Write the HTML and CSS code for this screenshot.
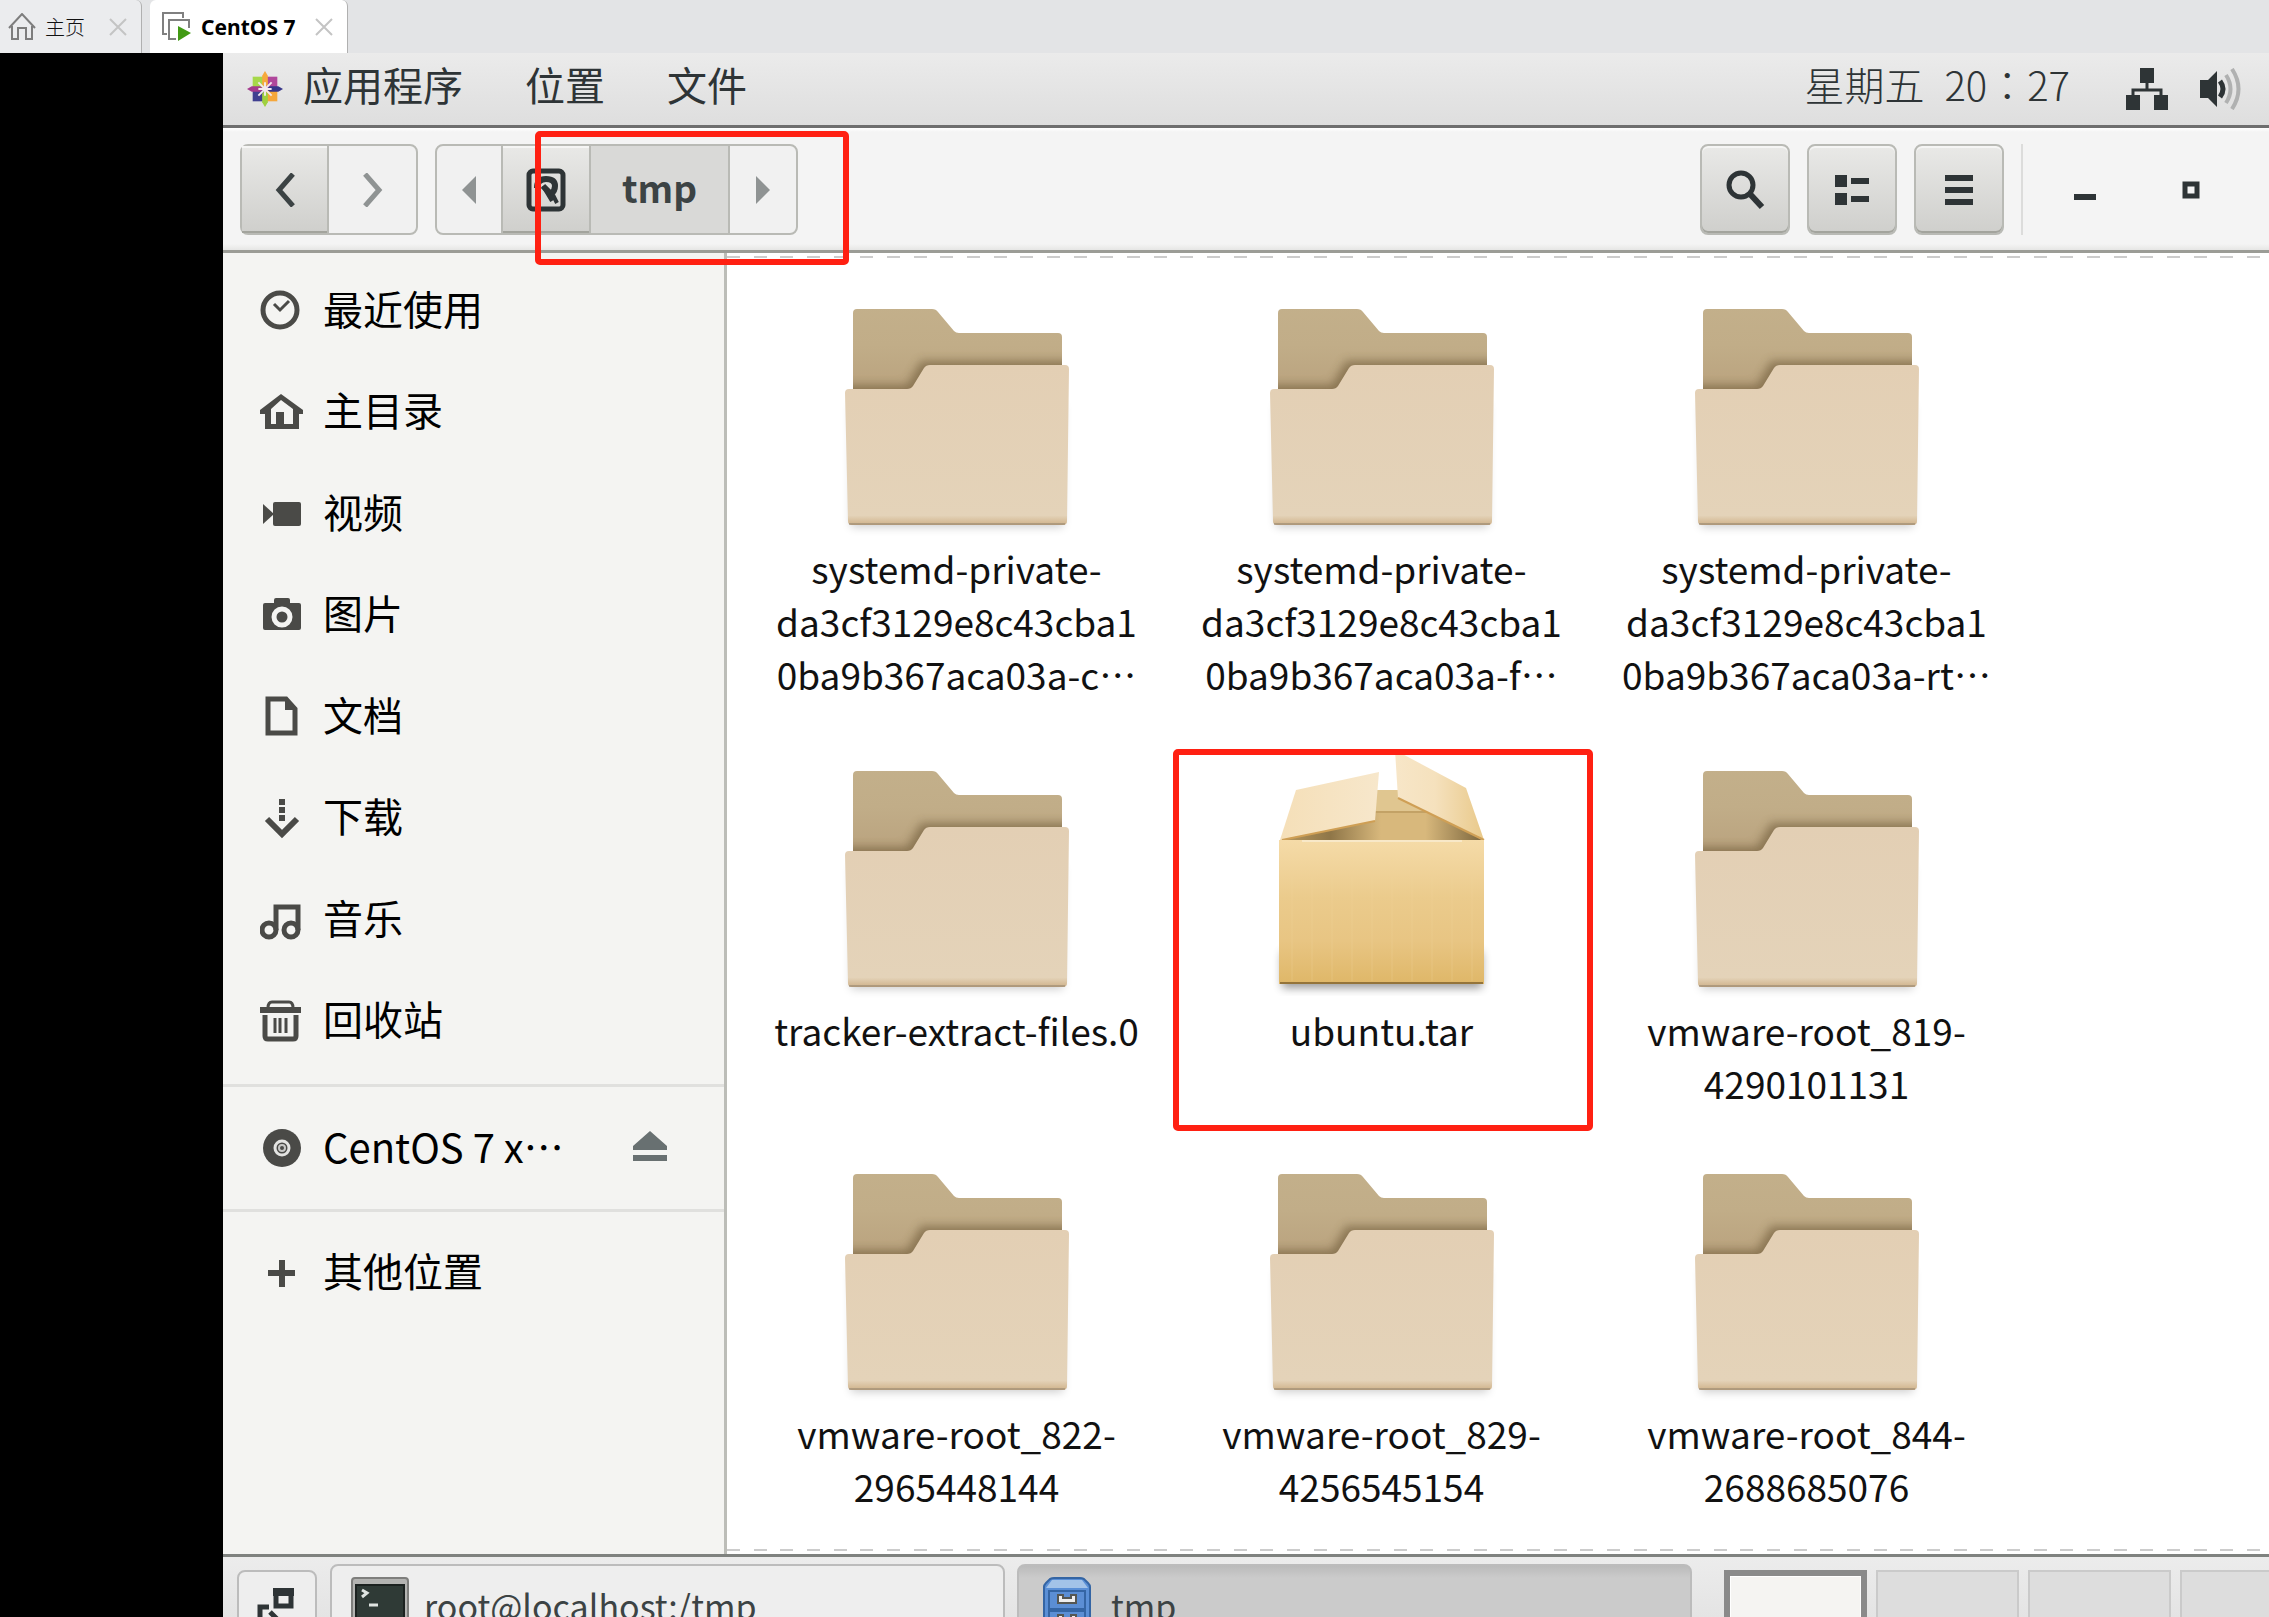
FILE: index.html
```
<!DOCTYPE html>
<html lang="zh-CN">
<head>
  <meta charset="utf-8">
  <title>CentOS 7</title>
  <link rel="stylesheet" href="styles.css">
</head>
<body>
  <!-- shared icons -->
  <svg class="defs" width="0" height="0">
    <defs>
      <linearGradient id="folder-back" x1="0" y1="0" x2="0" y2="1">
        <stop offset="0" stop-color="#c4b18c"/>
        <stop offset="0.5" stop-color="#c1ad88"/>
        <stop offset="1" stop-color="#b79f7b"/>
      </linearGradient>
      <linearGradient id="folder-front" x1="0" y1="0" x2="0" y2="1">
        <stop offset="0" stop-color="#e3cfb4"/>
        <stop offset="0.94" stop-color="#e4d3b9"/>
        <stop offset="1" stop-color="#cfb28a"/>
      </linearGradient>
      <linearGradient id="box-front" x1="0" y1="0" x2="0" y2="1">
        <stop offset="0" stop-color="#f5dba8"/>
        <stop offset="0.4" stop-color="#ebcb8c"/>
        <stop offset="0.7" stop-color="#e8c583"/>
        <stop offset="1" stop-color="#dfb768"/>
      </linearGradient>
      <linearGradient id="box-flap" x1="0" y1="0" x2="1" y2="0">
        <stop offset="0" stop-color="#f7e6c8"/>
        <stop offset="0.45" stop-color="#f5e1bd"/>
        <stop offset="1" stop-color="#e9c98a"/>
      </linearGradient>
      <linearGradient id="box-flap-left" x1="0" y1="0" x2="1" y2="0">
        <stop offset="0" stop-color="#f5dfb8"/>
        <stop offset="1" stop-color="#f7e7cb"/>
      </linearGradient>
      <linearGradient id="box-inside" x1="0" y1="0" x2="1" y2="0">
        <stop offset="0" stop-color="#b9995e"/>
        <stop offset="0.25" stop-color="#8f7648"/>
        <stop offset="0.5" stop-color="#d8b87c"/>
        <stop offset="0.72" stop-color="#d8b87c"/>
        <stop offset="1" stop-color="#7d673e"/>
      </linearGradient>
      <filter id="soft" x="-20%" y="-20%" width="140%" height="140%">
        <feGaussianBlur stdDeviation="5"/>
      </filter>
      <clipPath id="back-shape">
        <path d="M16 110V28q0-4 4-4h75q4 0 6 3l16 19q2 2 5 2h99q4 0 4 4v58z"/>
      </clipPath>
      <symbol id="folder" viewBox="0 0 240 256">
        <path d="M14 120h212v122H14z" fill="#000" opacity="0.2" filter="url(#soft)"/>
        <g clip-path="url(#back-shape)">
          <path d="M0 0h240v120H0z" fill="url(#folder-back)"/>
          <path d="M-10 100h80l14-24h170v60H-10z" fill="#6b5636" opacity="0.6" filter="url(#soft)"/>
        </g>
        <path d="M8 108q0-4 4-4h58q4 0 6-3l11-18q2-3 6-3h135q4 0 4 4l-2 152q0 4-4 4H15q-4 0-4-4z" fill="url(#folder-front)"/>
        <path d="M12 239h216" stroke="#8d7f6b" stroke-width="1"/>
      </symbol>
    </defs>
  </svg>

  <header class="tabs">
    <div class="tab">
      <svg width="28" height="28" viewBox="0 0 28 28" fill="none" stroke="#7d7d7d" stroke-width="2"><path d="M1 15 14 1l13 14M4 13v13h6V15h8v11h6V13"/></svg>
      <button class="tab-name">主页</button>
      <button class="tab-close" aria-label="关闭"><svg width="18" height="18" viewBox="0 0 18 18" stroke="#c4c4c4" stroke-width="2"><path d="M1 1l16 16M17 1 1 17"/></svg></button>
    </div>
    <div class="tab tab-active">
      <svg width="30" height="30" viewBox="0 0 30 30"><path d="M5 22H1V1h20v5M14 27H7V8h20v8" fill="none" stroke="#808080" stroke-width="2"/><path d="M16 14v15l13-8z" fill="#429a14"/></svg>
      <button class="tab-name">CentOS 7</button>
      <button class="tab-close" aria-label="关闭"><svg width="18" height="18" viewBox="0 0 18 18" stroke="#c4c4c4" stroke-width="2"><path d="M1 1l16 16M17 1 1 17"/></svg></button>
    </div>
  </header>

  <div class="desktop">
    <nav class="panel">
      <svg class="logo" width="36" height="38" viewBox="0 0 38 38">
        <path d="M6 6h12v12H6z" fill="#a6d84a"/><path d="M20 6h12v12H20z" fill="#b0479b"/>
        <path d="M6 20h12v12H6z" fill="#403f90"/><path d="M20 20h12v12H20z" fill="#f5a73b"/>
        <path d="M19 0l3 5v9l-3 4-3-4V5z" fill="#f6a93c"/><path d="M38 19l-5 3h-9l-4-3 4-3h9z" fill="#37368a"/>
        <path d="M19 38l-3-5v-9l3-4 3 4v9z" fill="#9fd03f"/><path d="M0 19l5-3h9l4 3-4 3H5z" fill="#a53a8e"/>
        <path d="M12 12l14 14M26 12 12 26M19 12v14M12 19h14" stroke="#f3e9ee" stroke-width="2"/>
      </svg>
      <button>应用程序</button>
      <button>位置</button>
      <button>文件</button>
      <div class="clock"><span>星期五</span><span>20：27</span></div>
      <svg class="network" width="42" height="42" viewBox="0 0 42 42" fill="#2e3436"><path d="M14 0h14v15H14zM0 27h14v15H0zM28 27h14v15H28z"/><path d="M21 14v9M7 28v-6h28v6" fill="none" stroke="#2e3436" stroke-width="3"/></svg>
      <svg width="42" height="42" viewBox="0 0 42 42" fill="none"><path d="M0 12h8l9-9v36l-9-9H0z" fill="#2e3436"/><path d="M20 13q6 8 0 16" stroke="#2e3436" stroke-width="5"/><path d="M26 7q9 14 0 28M32 1q13 20 0 40" stroke="#b0b1b1" stroke-width="4"/></svg>
    </nav>

    <div class="toolbar">
      <div class="group">
        <button class="raised nav-button" aria-label="后退"><svg width="20" height="34" viewBox="0 0 20 34" fill="none" stroke="#3c4344" stroke-width="5"><path d="M18 1 4 17l14 16"/></svg></button>
        <button class="nav-button" aria-label="前进"><svg width="20" height="34" viewBox="0 0 20 34" fill="none" stroke="#8f9393" stroke-width="5"><path d="M2 1l14 16L2 33"/></svg></button>
      </div>
      <div class="group pathbar">
        <button class="path-arrow" aria-label="上一级"><svg width="14" height="28" viewBox="0 0 14 28"><path d="M14 0v28L0 14z" fill="#8f9393"/></svg></button>
        <button class="raised path-root" aria-label="根目录">
          <svg width="40" height="44" viewBox="0 0 40 44" fill="none" stroke="#2e3436"><rect x="3" y="3" width="34" height="38" rx="4" stroke-width="5"/><path d="M11 20q0-9 9-9t9 7q0 5-4 8l-8-8" stroke-width="6"/><path d="M17 18l9 15M27 27l4 8" stroke-width="4"/></svg>
        </button>
        <button class="path-current">tmp</button>
        <button class="path-arrow" aria-label="下一级"><svg width="14" height="28" viewBox="0 0 14 28"><path d="M0 0v28l14-14z" fill="#8f9393"/></svg></button>
        <span class="mark mark-path"></span>
      </div>
      <div class="actions">
        <button class="raised action" aria-label="搜索"><svg width="40" height="40" viewBox="0 0 40 40" fill="none" stroke="#2e3436"><circle cx="16" cy="15" r="12" stroke-width="5"/><path d="M25 24l12 13" stroke-width="6"/></svg></button>
        <button class="raised action" aria-label="列表视图"><svg width="34" height="30" viewBox="0 0 34 30" fill="#2e3436"><path d="M0 0h12v12H0zM0 18h12v12H0zM16 3h18v6H16zM16 21h18v6H16z"/></svg></button>
        <button class="raised action" aria-label="菜单"><svg width="28" height="30" viewBox="0 0 28 30" fill="#2e3436"><path d="M0 0h28v6H0zM0 12h28v6H0zM0 24h28v6H0z"/></svg></button>
        <button class="window-button" aria-label="最小化"><svg width="22" height="22" viewBox="0 0 22 22"><path d="M0 15h22v6H0z" fill="#2e3436"/></svg></button>
        <button class="window-button" aria-label="最大化"><svg width="18" height="18" viewBox="0 0 18 18"><path d="M3 3h12v12H3z" fill="none" stroke="#2e3436" stroke-width="5"/></svg></button>
      </div>
    </div>

    <div class="content">
      <aside class="sidebar">
        <div class="places">
          <a href="#"><svg viewBox="0 0 44 44" fill="none" stroke="#4a4a47"><circle cx="20" cy="22" r="17" stroke-width="5"/><path d="M14 16l6 6 9-9" stroke-width="3"/></svg>最近使用</a>
          <a href="#"><svg viewBox="0 0 44 44"><path d="M21 5 43 21v4h-4v15H5V25H0v-4zM11 20v15h5V23h8v12h9V20l-12-9z" fill="#4a4a47"/></svg>主目录</a>
          <a href="#"><svg viewBox="0 0 44 44" fill="#4a4a47"><path d="M3 13l11 10L3 33z"/><rect x="13" y="11" width="28" height="24" rx="2"/></svg>视频</a>
          <a href="#"><svg viewBox="0 0 44 44"><path d="M5 11h9V8q0-2 2-2h12q2 0 2 2v3h9q2 0 2 2v23q0 2-2 2H5q-2 0-2-2V13q0-2 2-2z" fill="#4a4a47"/><circle cx="22" cy="25" r="8" fill="#4a4a47" stroke="#f4f4f2" stroke-width="5"/></svg>图片</a>
          <a href="#"><svg viewBox="0 0 44 44"><path d="M8 5h18l9 10v24H8z" fill="none" stroke="#4a4a47" stroke-width="5"/><path d="M25 4l12 12H25z" fill="#4a4a47"/></svg>文档</a>
          <a href="#"><svg viewBox="0 0 44 44" fill="#4a4a47"><path d="M19 4h6v6h-6zM19 12h6v6h-6zM19 20h6v6h-6z"/><path d="M7 24l15 15 15-15" fill="none" stroke="#4a4a47" stroke-width="6"/></svg>下载</a>
          <a href="#"><svg viewBox="0 0 44 44" fill="none" stroke="#4a4a47" stroke-width="5"><circle cx="9" cy="33" r="7"/><circle cx="31" cy="33" r="7"/><path d="M16 33V10h22v23"/></svg>音乐</a>
          <a href="#"><svg viewBox="0 0 44 44" fill="none" stroke="#4a4a47"><path d="M0 12h41" stroke-width="6"/><path d="M8 10q0-6 4-6h17q4 0 4 6" stroke-width="3"/><path d="M5 17v21q0 3 3 3h25q3 0 3-3V17" stroke-width="5"/><path d="M15 20v15M20 20v15M26 20v15" stroke-width="3"/></svg>回收站</a>
        </div>
        <div class="device">
          <a href="#"><svg viewBox="0 0 44 44" fill="none"><circle cx="22" cy="22" r="19" fill="#4a4a47"/><circle cx="22" cy="22" r="7" stroke="#e4e4e2" stroke-width="3"/><circle cx="22" cy="22" r="3" stroke="#c8c8c6" stroke-width="2"/></svg>CentOS 7 x…</a>
          <button aria-label="弹出"><svg width="34" height="30" viewBox="0 0 34 30" fill="#687071"><path d="M17 0l17 15v4H0v-4zM0 24h34v6H0z"/></svg></button>
        </div>
        <div class="other">
          <a href="#"><svg viewBox="0 0 44 44"><path d="M22 10v27M8 23h27" stroke="#4a4a47" stroke-width="6"/></svg>其他位置</a>
        </div>
      </aside>

      <main class="files">
        <a class="file" href="#"><svg><use href="#folder"/></svg><span>systemd-private-<br>da3cf3129e8c43cba1<br>0ba9b367aca03a-c…</span></a>
        <a class="file" href="#"><svg><use href="#folder"/></svg><span>systemd-private-<br>da3cf3129e8c43cba1<br>0ba9b367aca03a-f…</span></a>
        <a class="file" href="#"><svg><use href="#folder"/></svg><span>systemd-private-<br>da3cf3129e8c43cba1<br>0ba9b367aca03a-rt…</span></a>
        <a class="file" href="#"><svg><use href="#folder"/></svg><span>tracker-extract-files.0</span></a>
        <a class="file" href="#">
          <svg viewBox="0 0 240 256">
            <path d="M20 205h200v36H20z" fill="#000" opacity="0.4" filter="url(#soft)"/>
            <path d="M112 43h60l20 50H112z" fill="#e0c690"/>
            <path d="M18 93 112 65h62l46 28z" fill="url(#box-inside)"/>
            <path d="M113 65h60" stroke="#c3a266" stroke-width="2"/>
            <path d="M18 93 34 43l83-18-4 49z" fill="url(#box-flap-left)"/>
            <path d="M20 93l93-19" stroke="#cf9f55" stroke-width="2"/>
            <path d="M133 3l71 38 18 52-86-42z" fill="url(#box-flap)"/>
            <path d="M136 51l86 42" stroke="#cf9f55" stroke-width="2"/>
            <path d="M17 93h205v144H17z" fill="url(#box-front)"/>
            <path d="M30 120v114M50 120v114M70 110v124M90 110v124M110 110v124M130 110v124M150 110v124M170 110v124M190 120v114M210 120v114" stroke="#f3d79d" stroke-width="2" opacity="0.15"/>
            <path d="M40 94h160" stroke="#f8e8c8" stroke-width="2"/>
            <path d="M18 236h203" stroke="#94743a" stroke-width="2"/>
          </svg>
          <span>ubuntu.tar</span>
          <i class="mark mark-file"></i>
        </a>
        <a class="file" href="#"><svg><use href="#folder"/></svg><span>vmware-root_819-<br>4290101131</span></a>
        <a class="file" href="#"><svg><use href="#folder"/></svg><span>vmware-root_822-<br>2965448144</span></a>
        <a class="file" href="#"><svg><use href="#folder"/></svg><span>vmware-root_829-<br>4256545154</span></a>
        <a class="file" href="#"><svg><use href="#folder"/></svg><span>vmware-root_844-<br>2688685076</span></a>
      </main>
    </div>

    <footer class="taskbar">
      <button class="show-desktop" aria-label="显示桌面"><svg width="40" height="44" viewBox="0 0 40 44"><path d="M19 4h15v15H19z" fill="none" stroke="#2e3436" stroke-width="5"/><path d="M16 1h21v8H16z" fill="#2e3436"/><path d="M12 20H3v18h20v-8M13 25l8 8" fill="none" stroke="#2e3436" stroke-width="5"/></svg></button>
      <button class="task">
        <svg width="58" height="58" viewBox="0 0 58 58"><rect x="1" y="1" width="56" height="56" rx="3" fill="#b4b4b2" stroke="#7e7e7c" stroke-width="2"/><path d="M5 8h48v46H5z" fill="#2f3a36" stroke="#1c2220" stroke-width="2"/><path d="M11 13l5 3-5 4M18 28h9" fill="none" stroke="#dfe4e1" stroke-width="3"/></svg>
        root@localhost:/tmp
      </button>
      <button class="task task-active">
        <svg width="58" height="58" viewBox="0 0 58 58"><path d="M6 10q0-2 2-4l4-4q2-1 4-1h26q2 0 4 1l4 4q2 2 2 4v47H6z" fill="#5a8fd6" stroke="#3465a4" stroke-width="2"/><path d="M8 11 14 3h30l6 8z" fill="#a3c3e8"/><path d="M11 14h36v18H11zM11 34h36v18H11z" fill="#5b8ed4" stroke="#3465a4" stroke-width="2"/><path d="M20 18v8h18v-8h-5v3h-8v-3zM20 38v8h18v-8h-5v3h-8v-3z" fill="#eee" stroke="#555753" stroke-width="2"/></svg>
        tmp
      </button>
      <div class="workspaces">
        <button class="current" aria-label="工作区 1"></button>
        <button aria-label="工作区 2"></button>
        <button aria-label="工作区 3"></button>
        <button aria-label="工作区 4"></button>
      </div>
    </footer>
  </div>
</body>
</html>
```
FILE: styles.css
```
* {
  box-sizing: border-box;
}

body {
  margin: 0;
  height: 100vh;
  display: flex;
  flex-direction: column;
  overflow: hidden;
  background: #000;
  font-family: "Noto Sans CJK SC", sans-serif;
  font-size: 37px;
  color: #111;
}

button {
  margin: 0;
  padding: 0;
  border: none;
  background: none;
  font: inherit;
  color: inherit;
}

a {
  color: inherit;
  text-decoration: none;
}

svg {
  flex: none;
  display: block;
}

.defs {
  position: absolute;
}

/* VM tabs */
.tabs {
  flex: none;
  display: flex;
  gap: 8px;
  height: 53px;
  background: #e3e4e6;
}

.tab {
  display: flex;
  align-items: center;
  width: 142px;
  padding: 0 14px 0 8px;
  background: #ebecee;
  border-right: 1px solid #b0b0b0;
  border-top-right-radius: 6px;
  font-size: 20px;
  font-weight: 300;
  color: #111;
}

.tab-active {
  width: 198px;
  padding-left: 12px;
  background: #fff;
  border-radius: 6px 6px 0 0;
  font-family: "Noto Sans", sans-serif;
  font-size: 21px;
  font-weight: bold;
  color: #000;
}

.tab-name {
  margin: 0 auto 0 9px;
}

/* GNOME panel */
.desktop {
  flex: 1;
  min-height: 0;
  margin-left: 223px;
  display: flex;
  flex-direction: column;
}

.panel {
  flex: none;
  display: flex;
  align-items: center;
  height: 75px;
  padding: 0 27px 0 24px;
  background: linear-gradient(#ebebeb, #dedede);
  border-bottom: 3px solid #6e6e6e;
  font-size: 40px;
  line-height: 60px;
  color: #2e3436;
}

.panel button {
  margin: 0 62px 10px 0;
}

.panel .logo {
  margin-right: 20px;
}

.clock {
  display: flex;
  gap: 20px;
  margin: 0 0 10px auto;
  font-family: "Noto Sans CJK TC", sans-serif;
  font-weight: 300;
}

.network {
  margin: 0 32px 0 56px;
}

/* Toolbar */
.toolbar {
  flex: none;
  display: flex;
  gap: 17px;
  height: 125px;
  padding: 16px 0 0 17px;
  background: linear-gradient(#fff, #f4f4f4 4px, #f4f4f4 116px, #e6e6e5);
  border-bottom: 3px solid #9b9c96;
}

.group {
  display: flex;
  height: 91px;
  border: 2px solid #b9bab5;
  border-radius: 8px;
  background: #f1f1f1;
}

.group button {
  display: flex;
  align-items: center;
  justify-content: center;
  border-right: 2px solid #b9bab5;
}

.group button:last-of-type {
  border-right: none;
}

.raised {
  background: linear-gradient(#e9e9e7, #cfcfcc);
  box-shadow: inset 0 2px #f5f5f4, inset 0 -2px #a3a49d;
}

.nav-button {
  width: 87px;
}

.pathbar {
  position: relative;
}

.path-arrow {
  width: 66px;
}

.path-root {
  width: 88px;
}

.group .path-current {
  width: 139px;
  padding-bottom: 5px;
  background: #d9d9d7;
  font-weight: bold;
  color: #3c4344;
}

.mark {
  position: absolute;
  z-index: 2;
  border: 6px solid #ff2012;
  border-radius: 5px;
}

.mark-path {
  left: 98px;
  top: -15px;
  width: 314px;
  height: 134px;
}

.actions {
  display: flex;
  gap: 17px;
  height: 91px;
  margin-left: auto;
}

.action {
  display: flex;
  align-items: center;
  justify-content: center;
  width: 90px;
  border: 2px solid #b9bab5;
  border-radius: 8px;
}

.window-button {
  display: flex;
  align-items: center;
  justify-content: center;
  width: 56px;
}

.action + .window-button {
  width: 125px;
  border-left: 2px solid #dcdcdb;
}

.window-button:last-child {
  margin-right: 50px;
}

/* Sidebar */
.content {
  flex: 1;
  min-height: 0;
  display: flex;
}

.sidebar {
  flex: none;
  width: 504px;
  background: #f4f4f2;
  border-right: 3px solid #bcbdb8;
}

.places {
  display: flex;
  flex-direction: column;
  height: 831px;
  padding: 4px 0 15px;
}

.sidebar a {
  flex: 1;
  display: flex;
  align-items: center;
  gap: 19px;
  padding-left: 37px;
  font-size: 40px;
  color: #000;
}

.sidebar a svg {
  width: 44px;
  height: 44px;
  margin-top: 4px;
}

.device {
  display: flex;
  align-items: center;
  height: 128px;
  padding: 0 57px 4px 0;
  border: solid #e0e0de;
  border-width: 3px 0;
}

.other {
  display: flex;
  height: 116px;
}

/* Files */
.files {
  flex: 1;
  display: grid;
  grid-template-columns: repeat(auto-fill, 425px);
  grid-template-rows: 462px 403px;
  padding: 32px 230px 0 17px;
  background:
    repeating-linear-gradient(90deg, #ccc 0 13px, #fff 13px 27px, #ccc 27px 40px, #fff 40px 53px, #ccc 53px 66px, #fff 66px 80px) 0 3px / 100% 2px no-repeat,
    repeating-linear-gradient(90deg, #ccc 0 13px, #fff 13px 27px, #ccc 27px 40px, #fff 40px 53px, #ccc 53px 66px, #fff 66px 80px) 0 calc(100% - 3px) / 100% 2px no-repeat,
    #fff;
}

.file {
  position: relative;
  display: flex;
  flex-direction: column;
  align-items: center;
  gap: 1px;
  line-height: 53px;
  text-align: center;
}

.file svg {
  width: 240px;
  height: 256px;
}

.mark-file {
  left: 4px;
  top: 2px;
  width: 420px;
  height: 382px;
}

/* Bottom taskbar */
.taskbar {
  flex: none;
  display: flex;
  height: 63px;
  padding: 7px 0 0 14px;
  background: linear-gradient(#ececec, #e4e4e4);
  border-top: 3px solid #7f827f;
  overflow: hidden;
}

.taskbar > button {
  flex: none;
  display: flex;
  align-items: center;
  border: 2px solid #bcbcbc;
  border-radius: 8px;
  background: #eee;
}

.taskbar .show-desktop {
  justify-content: center;
  width: 80px;
  height: 78px;
  margin: 6px 13px 0 0;
}

.taskbar .task {
  width: 675px;
  height: 84px;
  margin-right: 12px;
  padding-left: 19px;
  gap: 15px;
  font-size: 34px;
  line-height: 40px;
  color: #3c4344;
}

.taskbar .task-active {
  background: linear-gradient(#bbb, #cbcbcb 12px);
}

.workspaces {
  display: flex;
  gap: 9px;
  margin: 6px 0 0 20px;
}

.workspaces button {
  flex: none;
  width: 143px;
  height: 78px;
  border: 2px solid #cacaca;
  background: #ddd;
}

.workspaces .current {
  border: 6px solid #8a8a8a;
  background: #f5f4f2;
  box-shadow: inset 0 0 0 1px #fff;
}
```
